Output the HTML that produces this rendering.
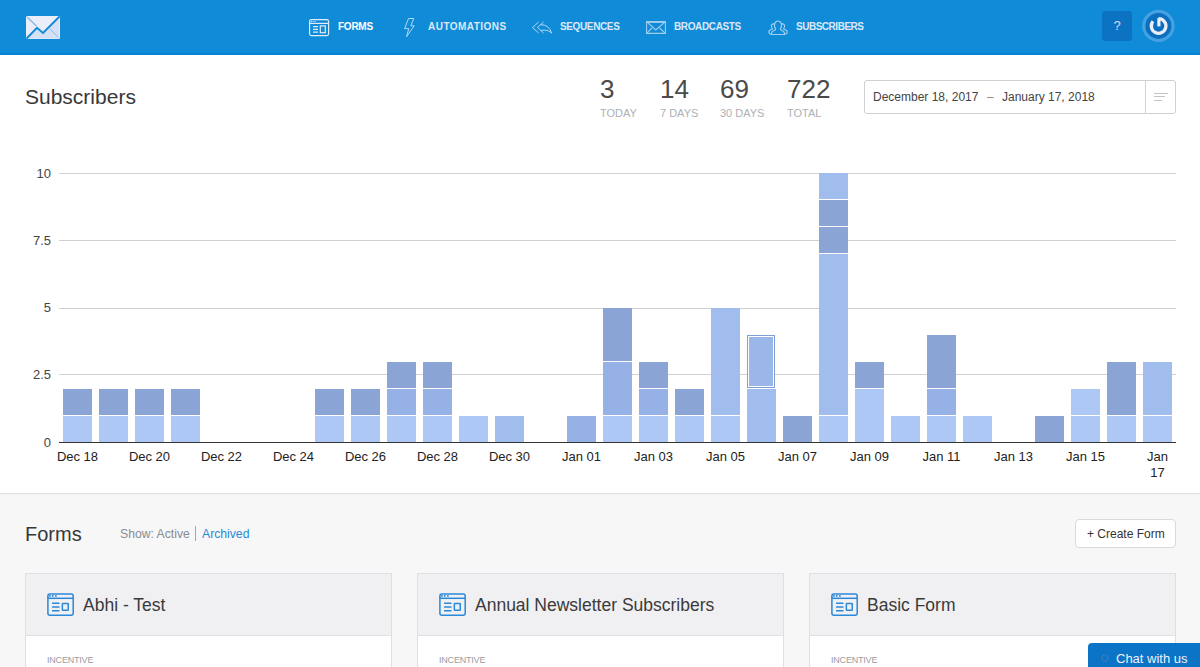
<!DOCTYPE html>
<html><head><meta charset="utf-8">
<style>
*{margin:0;padding:0;box-sizing:border-box}
html,body{width:1200px;height:667px;overflow:hidden;background:#f7f7f8;font-family:"Liberation Sans",sans-serif}
.abs{position:absolute;white-space:nowrap}
#hdr{position:absolute;left:0;top:0;width:1200px;height:55px;background:#108bd8;border-bottom:2px solid #0783d6}
.nav{position:absolute;top:21px;font-size:10px;font-weight:bold;line-height:11px;color:#dce8f7}
.nav.act{color:#ffffff}
#sub{position:absolute;left:0;top:55px;width:1200px;height:439px;background:#ffffff;border-bottom:1px solid #dcdde3}
.num{position:absolute;top:74px;font-size:26px;line-height:30px;color:#4a4a4a}
.lbl{position:absolute;top:106px;font-size:11px;line-height:14px;color:#aeb0b6}
.card{position:absolute;top:573px;width:367px;height:120px;background:#fff;border:1px solid #dfe0e6}
.card .hd{position:absolute;left:0;top:0;width:365px;height:62px;background:#f0f0f3;border-bottom:1px solid #dfe0e6}
.card .ttl{position:absolute;left:57px;top:20px;font-size:17.5px;line-height:22px;color:#3a3a3a;white-space:nowrap}
.card svg{position:absolute;left:21px;top:19px}
.card .inc{position:absolute;left:21px;top:80px;font-size:9px;line-height:12px;color:#9a9ca2;letter-spacing:-0.2px}
</style></head><body>
<div id="hdr">
  <svg class="abs" style="left:0;top:0" width="1200" height="55" viewBox="0 0 1200 55">
    <!-- logo -->
    <rect x="26" y="16" width="34" height="23" rx="1.5" fill="#e9eef9"/>
    <path d="M27 38.5 L37 28 L43 33 L59 17 L59 38.5 Z" fill="#d3e0f5"/>
    <path d="M27.5 17.5 L36.5 26" stroke="#7fb0e8" stroke-width="1.2" fill="none"/>
    <path d="M50 29 L58.5 37.5" stroke="#8fbaea" stroke-width="1" fill="none"/>
    <path d="M26.5 38.5 L37 27.8 L43 33 L59.5 16.5" stroke="#108bd8" stroke-width="1.9" fill="none" stroke-linejoin="miter"/>
    <!-- forms icon -->
    <g fill="none" stroke="#e4ecf8" stroke-width="1.2">
      <rect x="309.6" y="19.6" width="19" height="16" rx="1.8"/>
      <path d="M309.6 23.4 H328.6"/>
      <path d="M313 26.6 H318 M313 29.4 H318 M313 32.2 H318"/>
      <rect x="320.3" y="25.9" width="5" height="6.8"/>
    </g>
    <g fill="#e4ecf8"><rect x="311" y="21" width="1" height="1"/><rect x="312.8" y="21" width="1" height="1"/><rect x="314.6" y="21" width="1" height="1"/></g>
    <!-- automations bolt -->
    <path d="M408.5 18.5 L413.8 18.5 L410.8 25.8 L414.2 25.8 L406.5 36.8 L408.8 28.6 L404.6 28.6 Z" fill="none" stroke="#b4d7f3" stroke-width="1" stroke-linejoin="round"/>
    <!-- sequences -->
    <g fill="none" stroke="#b4d7f3" stroke-width="1" stroke-linejoin="round" stroke-linecap="round">
      <path d="M538.3 22.3 L532.5 27.5 L538.3 32.7"/>
      <path d="M543.3 22.3 L537.5 27.5 L543.3 32.7"/>
      <path d="M541 24.6 Q549.5 25 551.6 33.2 Q548.5 29.3 541 30.3"/>
    </g>
    <!-- broadcasts -->
    <g fill="none" stroke="#9fcdf0" stroke-width="1.1" stroke-linejoin="round">
      <path d="M646.6 22 H665.4" stroke-width="1.8"/>
      <rect x="646.6" y="21.6" width="18.8" height="11.8"/>
      <path d="M646.6 21.6 L655.8 30 L665.4 21.6"/>
      <path d="M646.6 33.4 L652 28 M665.4 33.4 L659.6 28"/>
    </g>
    <!-- subscribers -->
    <g fill="none" stroke="#a6d0f1" stroke-width="1.1" stroke-linejoin="round">
      <path d="M772 34.5 Q768 34 769 31 Q770.5 29.5 772.5 29 Q771 27 771.5 25 Q773 23 775 24.5"/>
      <path d="M784 34.5 Q788 34 787 31 Q785.5 29.5 783.5 29 Q785 27 784.5 25 Q783 23 781 24.5"/>
      <path d="M771.5 34.5 Q771 31.5 775 30 Q776 29.5 775.5 28.5 Q774 26.5 774.5 24 Q775.5 21 778 21 Q780.5 21 781.5 24 Q782 26.5 780.5 28.5 Q780 29.5 781 30 Q785 31.5 784.5 34.5 Z"/>
    </g>
    <!-- help -->
    <rect x="1102" y="11" width="30" height="30" rx="3" fill="#0c73c3"/>
    <!-- power -->
    <circle cx="1158.4" cy="25.9" r="16.2" fill="#44a1e3"/>
    <circle cx="1158.4" cy="25.9" r="13" fill="#0b6ebf"/>
    <path d="M1158.6 18.7 A7.3 7.3 0 1 1 1153.01 21.31" fill="none" stroke="#eceef8" stroke-width="3.3" stroke-linecap="butt"/>
    <path d="M1158.9 18.2 V26.4" stroke="#eceef8" stroke-width="3.2" stroke-linecap="butt"/>
  </svg>
  <div class="nav act" style="left:338px;letter-spacing:-0.25px">FORMS</div>
  <div class="nav" style="left:428px;letter-spacing:0.47px">AUTOMATIONS</div>
  <div class="nav" style="left:560px;letter-spacing:-0.37px">SEQUENCES</div>
  <div class="nav" style="left:674px;letter-spacing:-0.37px">BROADCASTS</div>
  <div class="nav" style="left:796px;letter-spacing:-0.48px">SUBSCRIBERS</div>
  <div class="abs" style="left:1102px;top:18px;width:30px;text-align:center;font-size:13px;line-height:15px;color:#dcd8f6">?</div>
</div>
<div id="sub">
</div>
<div class="abs" style="left:25px;top:85px;font-size:21px;line-height:24px;color:#383838">Subscribers</div>
<div class="num" style="left:600px">3</div>
<div class="num" style="left:660px">14</div>
<div class="num" style="left:720px">69</div>
<div class="num" style="left:787px">722</div>
<div class="lbl" style="left:600px">TODAY</div>
<div class="lbl" style="left:660px">7 DAYS</div>
<div class="lbl" style="left:720px">30 DAYS</div>
<div class="lbl" style="left:787px">TOTAL</div>
<div class="abs" style="left:864px;top:80px;width:312px;height:34px;border:1px solid #cfd0d4;border-radius:3px;background:#fff"></div>
<div class="abs" style="left:1145px;top:81px;width:1px;height:32px;background:#d2d3d7"></div>
<div class="abs" style="left:1154px;top:93px;width:14px;height:1px;background:#c4c5ca"></div>
<div class="abs" style="left:1154px;top:96px;width:11px;height:1px;background:#c4c5ca"></div>
<div class="abs" style="left:1154px;top:100px;width:8px;height:1px;background:#c4c5ca"></div>
<div class="abs" style="left:873px;top:90px;font-size:12px;line-height:14px;color:#444444">December 18, 2017</div>
<div class="abs" style="left:987px;top:90px;font-size:12px;line-height:14px;color:#888888">–</div>
<div class="abs" style="left:1002px;top:90px;font-size:12px;line-height:14px;color:#444444">January 17, 2018</div>
<svg width="1200" height="330" viewBox="0 150 1200 330" style="position:absolute;left:0;top:150px">
<rect x="59" y="173" width="1117" height="1" fill="#cfd0d4"/>
<rect x="59" y="240" width="1117" height="1" fill="#cfd0d4"/>
<rect x="59" y="308" width="1117" height="1" fill="#cfd0d4"/>
<rect x="59" y="374" width="1117" height="1" fill="#cfd0d4"/>
<rect x="63" y="416" width="29" height="26" fill="#aec8f6"/>
<rect x="63" y="389" width="29" height="26" fill="#8aa4d5"/>
<rect x="99" y="416" width="29" height="26" fill="#aec8f6"/>
<rect x="99" y="389" width="29" height="26" fill="#8aa4d5"/>
<rect x="135" y="416" width="29" height="26" fill="#aec8f6"/>
<rect x="135" y="389" width="29" height="26" fill="#8aa4d5"/>
<rect x="171" y="416" width="29" height="26" fill="#aec8f6"/>
<rect x="171" y="389" width="29" height="26" fill="#8aa4d5"/>
<rect x="315" y="416" width="29" height="26" fill="#aec8f6"/>
<rect x="315" y="389" width="29" height="26" fill="#8aa4d5"/>
<rect x="351" y="416" width="29" height="26" fill="#aec8f6"/>
<rect x="351" y="389" width="29" height="26" fill="#8aa4d5"/>
<rect x="387" y="416" width="29" height="26" fill="#aec8f6"/>
<rect x="387" y="389" width="29" height="26" fill="#95b1e6"/>
<rect x="387" y="362" width="29" height="26" fill="#8aa4d5"/>
<rect x="423" y="416" width="29" height="26" fill="#aec8f6"/>
<rect x="423" y="389" width="29" height="26" fill="#95b1e6"/>
<rect x="423" y="362" width="29" height="26" fill="#8aa4d5"/>
<rect x="459" y="416" width="29" height="26" fill="#aec8f6"/>
<rect x="495" y="416" width="29" height="26" fill="#a1bdee"/>
<rect x="567" y="416" width="29" height="26" fill="#95b1e6"/>
<rect x="603" y="416" width="29" height="26" fill="#aec8f6"/>
<rect x="603" y="362" width="29" height="53" fill="#95b1e6"/>
<rect x="603" y="308" width="29" height="53" fill="#8aa4d5"/>
<rect x="639" y="416" width="29" height="26" fill="#aec8f6"/>
<rect x="639" y="389" width="29" height="26" fill="#95b1e6"/>
<rect x="639" y="362" width="29" height="26" fill="#8aa4d5"/>
<rect x="675" y="416" width="29" height="26" fill="#aec8f6"/>
<rect x="675" y="389" width="29" height="26" fill="#8aa4d5"/>
<rect x="711" y="416" width="29" height="26" fill="#aec8f6"/>
<rect x="711" y="308" width="29" height="107" fill="#a1bdee"/>
<rect x="747" y="389" width="29" height="53" fill="#a1bdee"/>
<rect x="747" y="335" width="28" height="53" fill="#9bb7ea"/>
<rect x="747.5" y="335.5" width="27" height="52" fill="none" stroke="#7f9fd9" stroke-width="1"/>
<rect x="748.5" y="336.5" width="25" height="50" fill="none" stroke="#ffffff" stroke-width="1"/>
<rect x="783" y="416" width="29" height="26" fill="#8aa4d5"/>
<rect x="819" y="416" width="29" height="26" fill="#aec8f6"/>
<rect x="819" y="254" width="29" height="161" fill="#a1bdee"/>
<rect x="819" y="227" width="29" height="26" fill="#8aa4d5"/>
<rect x="819" y="200" width="29" height="26" fill="#8aa4d5"/>
<rect x="819" y="173" width="29" height="26" fill="#a1bdee"/>
<rect x="855" y="389" width="29" height="53" fill="#aec8f6"/>
<rect x="855" y="362" width="29" height="26" fill="#8aa4d5"/>
<rect x="891" y="416" width="29" height="26" fill="#aec8f6"/>
<rect x="927" y="416" width="29" height="26" fill="#aec8f6"/>
<rect x="927" y="389" width="29" height="26" fill="#95b1e6"/>
<rect x="927" y="335" width="29" height="53" fill="#8aa4d5"/>
<rect x="963" y="416" width="29" height="26" fill="#aec8f6"/>
<rect x="1035" y="416" width="29" height="26" fill="#8aa4d5"/>
<rect x="1071" y="416" width="29" height="26" fill="#aec8f6"/>
<rect x="1071" y="389" width="29" height="26" fill="#aec8f6"/>
<rect x="1107" y="416" width="29" height="26" fill="#aec8f6"/>
<rect x="1107" y="362" width="29" height="53" fill="#8aa4d5"/>
<rect x="1143" y="416" width="29" height="26" fill="#aec8f6"/>
<rect x="1143" y="362" width="29" height="53" fill="#a1bdee"/>
<rect x="59" y="442" width="1117" height="1" fill="#333333"/>
<text x="51" y="446.6" text-anchor="end" font-family="Liberation Sans" font-size="13" fill="#444444">0</text>
<text x="51" y="379.4" text-anchor="end" font-family="Liberation Sans" font-size="13" fill="#444444">2.5</text>
<text x="51" y="312.1" text-anchor="end" font-family="Liberation Sans" font-size="13" fill="#444444">5</text>
<text x="51" y="244.8" text-anchor="end" font-family="Liberation Sans" font-size="13" fill="#444444">7.5</text>
<text x="51" y="177.6" text-anchor="end" font-family="Liberation Sans" font-size="13" fill="#444444">10</text>
<text x="77.5" y="460.8" text-anchor="middle" font-family="Liberation Sans" font-size="13" fill="#222222">Dec 18</text>
<text x="149.5" y="460.8" text-anchor="middle" font-family="Liberation Sans" font-size="13" fill="#222222">Dec 20</text>
<text x="221.5" y="460.8" text-anchor="middle" font-family="Liberation Sans" font-size="13" fill="#222222">Dec 22</text>
<text x="293.5" y="460.8" text-anchor="middle" font-family="Liberation Sans" font-size="13" fill="#222222">Dec 24</text>
<text x="365.5" y="460.8" text-anchor="middle" font-family="Liberation Sans" font-size="13" fill="#222222">Dec 26</text>
<text x="437.5" y="460.8" text-anchor="middle" font-family="Liberation Sans" font-size="13" fill="#222222">Dec 28</text>
<text x="509.5" y="460.8" text-anchor="middle" font-family="Liberation Sans" font-size="13" fill="#222222">Dec 30</text>
<text x="581.5" y="460.8" text-anchor="middle" font-family="Liberation Sans" font-size="13" fill="#222222">Jan 01</text>
<text x="653.5" y="460.8" text-anchor="middle" font-family="Liberation Sans" font-size="13" fill="#222222">Jan 03</text>
<text x="725.5" y="460.8" text-anchor="middle" font-family="Liberation Sans" font-size="13" fill="#222222">Jan 05</text>
<text x="797.5" y="460.8" text-anchor="middle" font-family="Liberation Sans" font-size="13" fill="#222222">Jan 07</text>
<text x="869.5" y="460.8" text-anchor="middle" font-family="Liberation Sans" font-size="13" fill="#222222">Jan 09</text>
<text x="941.5" y="460.8" text-anchor="middle" font-family="Liberation Sans" font-size="13" fill="#222222">Jan 11</text>
<text x="1013.5" y="460.8" text-anchor="middle" font-family="Liberation Sans" font-size="13" fill="#222222">Jan 13</text>
<text x="1085.5" y="460.8" text-anchor="middle" font-family="Liberation Sans" font-size="13" fill="#222222">Jan 15</text>
<text x="1157.5" y="460.8" text-anchor="middle" font-family="Liberation Sans" font-size="13" fill="#222222">Jan</text>
<text x="1157.5" y="477.3" text-anchor="middle" font-family="Liberation Sans" font-size="13" fill="#222222">17</text>
</svg>
<div class="abs" style="left:25px;top:522px;font-size:20px;line-height:24px;color:#383838">Forms</div>
<div class="abs" style="left:120px;top:527px;font-size:12.2px;line-height:15px;color:#8a8c92">Show: Active</div>
<div class="abs" style="left:194.5px;top:526px;width:1px;height:15px;background:#a4a6ac"></div>
<div class="abs" style="left:202px;top:527px;font-size:12.2px;line-height:15px;color:#1f8ad6">Archived</div>
<div class="abs" style="left:1075px;top:519px;width:101px;height:29px;border:1px solid #d8dae0;border-radius:4px;background:#fff"></div>
<div class="abs" style="left:1087px;top:527px;font-size:12px;line-height:15px;color:#333333">+ Create Form</div>
<div class="card" style="left:25px"><div class="hd"></div>
  <svg width="28" height="24" viewBox="0 0 28 24"><g fill="none" stroke="#2a88d8" stroke-width="1.5"><rect x="0.9" y="0.9" width="25.3" height="21.3" rx="2"/><path d="M0.9 5.3 H26.2"/><path d="M5.1 10.3 H12.5 M5.1 13.9 H12.5 M5.1 17.7 H12.5"/><rect x="15.35" y="10.55" width="5.9" height="6.6" rx="0.5"/></g><g fill="#2a88d8"><circle cx="2.9" cy="2.9" r="0.95"/><circle cx="5.8" cy="2.9" r="0.95"/><circle cx="8.9" cy="2.9" r="0.95"/></g></svg>
  <div class="ttl">Abhi - Test</div><div class="inc">INCENTIVE</div></div>
<div class="card" style="left:417px"><div class="hd"></div>
  <svg width="28" height="24" viewBox="0 0 28 24"><g fill="none" stroke="#2a88d8" stroke-width="1.5"><rect x="0.9" y="0.9" width="25.3" height="21.3" rx="2"/><path d="M0.9 5.3 H26.2"/><path d="M5.1 10.3 H12.5 M5.1 13.9 H12.5 M5.1 17.7 H12.5"/><rect x="15.35" y="10.55" width="5.9" height="6.6" rx="0.5"/></g><g fill="#2a88d8"><circle cx="2.9" cy="2.9" r="0.95"/><circle cx="5.8" cy="2.9" r="0.95"/><circle cx="8.9" cy="2.9" r="0.95"/></g></svg>
  <div class="ttl">Annual Newsletter Subscribers</div><div class="inc">INCENTIVE</div></div>
<div class="card" style="left:809px"><div class="hd"></div>
  <svg width="28" height="24" viewBox="0 0 28 24"><g fill="none" stroke="#2a88d8" stroke-width="1.5"><rect x="0.9" y="0.9" width="25.3" height="21.3" rx="2"/><path d="M0.9 5.3 H26.2"/><path d="M5.1 10.3 H12.5 M5.1 13.9 H12.5 M5.1 17.7 H12.5"/><rect x="15.35" y="10.55" width="5.9" height="6.6" rx="0.5"/></g><g fill="#2a88d8"><circle cx="2.9" cy="2.9" r="0.95"/><circle cx="5.8" cy="2.9" r="0.95"/><circle cx="8.9" cy="2.9" r="0.95"/></g></svg>
  <div class="ttl">Basic Form</div><div class="inc">INCENTIVE</div></div>
<div class="abs" style="left:1088px;top:643px;width:120px;height:30px;background:#0b74c6;border-radius:4px"></div>
<svg class="abs" style="left:1100px;top:653px" width="10" height="10" viewBox="0 0 10 10"><circle cx="5" cy="5" r="3" fill="none" stroke="#8f8aa8" stroke-width="1" stroke-dasharray="1 1"/></svg>
<div class="abs" style="left:1116px;top:651px;font-size:13px;line-height:15px;color:#f0f0fa">Chat with us</div>
</body></html>
